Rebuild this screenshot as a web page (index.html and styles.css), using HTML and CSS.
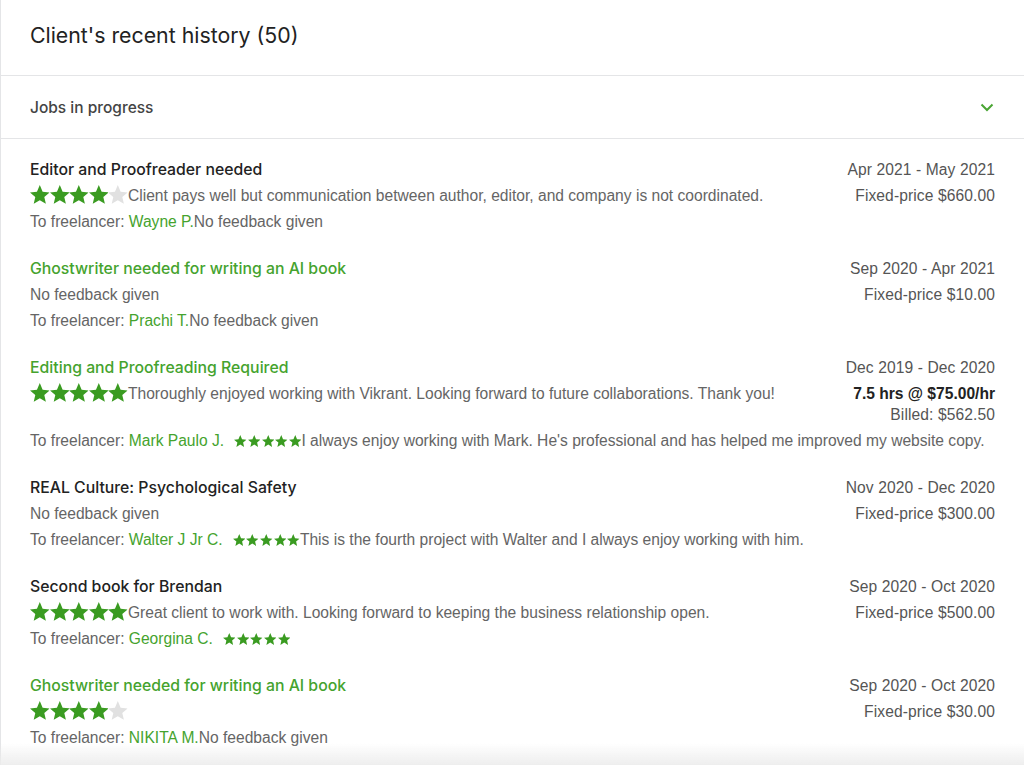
FILE: index.html
```html
<!DOCTYPE html>
<html lang="en">
<head>
    <meta charset="UTF-8">
    <meta name="viewport" content="width=device-width, initial-scale=1.0">
    <title>Client's recent history</title>
    <link rel="stylesheet" href="styles.css">
</head>
<body>
    <svg class="defs" aria-hidden="true">
        <symbol id="star" viewBox="2 2 20 19.3">
            <path d="M12 2l2.9 6.9 7.1.6-5.4 4.7 1.6 7-6.2-3.8-6.2 3.8 1.6-7L2 9.5l7.1-.6z"/>
        </symbol>
    </svg>

    <section class="history">
        <header class="history-head">
            <h2>Client's recent history (50)</h2>
        </header>

        <div class="accordion">
            <span>Jobs in progress</span>
            <svg class="chevron" viewBox="0 0 16 16" width="16" height="16">
                <path d="M2.5 5.5l5.5 5.5 5.5-5.5" fill="none" stroke="currentColor" stroke-width="2"/>
            </svg>
        </div>

        <ul class="jobs">
            <li class="job">
                <div class="row">
                    <span class="job-title">Editor and Proofreader needed</span>
                    <span class="meta">Apr 2021 - May 2021</span>
                </div>
                <div class="row">
                    <span class="feedback"><span class="stars big"><svg class="on"><use href="#star"/></svg><svg class="on"><use href="#star"/></svg><svg class="on"><use href="#star"/></svg><svg class="on"><use href="#star"/></svg><svg class="off"><use href="#star"/></svg></span>Client pays well but communication between author, editor, and company is not coordinated.</span>
                    <span class="meta">Fixed-price $660.00</span>
                </div>
                <div class="row">
                    <span class="feedback">To freelancer: <a href="#">Wayne P.</a>No feedback given</span>
                </div>
            </li>

            <li class="job">
                <div class="row">
                    <a href="#" class="job-title link">Ghostwriter needed for writing an AI book</a>
                    <span class="meta">Sep 2020 - Apr 2021</span>
                </div>
                <div class="row">
                    <span class="feedback">No feedback given</span>
                    <span class="meta">Fixed-price $10.00</span>
                </div>
                <div class="row">
                    <span class="feedback">To freelancer: <a href="#">Prachi T.</a>No feedback given</span>
                </div>
            </li>

            <li class="job">
                <div class="row">
                    <a href="#" class="job-title link">Editing and Proofreading Required</a>
                    <span class="meta">Dec 2019 - Dec 2020</span>
                </div>
                <div class="row">
                    <span class="feedback"><span class="stars big"><svg class="on"><use href="#star"/></svg><svg class="on"><use href="#star"/></svg><svg class="on"><use href="#star"/></svg><svg class="on"><use href="#star"/></svg><svg class="on"><use href="#star"/></svg></span>Thoroughly enjoyed working with Vikrant. Looking forward to future collaborations. Thank you!</span>
                    <span class="meta">
                        <strong>7.5 hrs @ $75.00/hr</strong>
                        <span class="billed">Billed: $562.50</span>
                    </span>
                </div>
                <div class="row">
                    <span class="feedback">To freelancer: <a href="#">Mark Paulo J.</a><span class="stars small"><svg class="on"><use href="#star"/></svg><svg class="on"><use href="#star"/></svg><svg class="on"><use href="#star"/></svg><svg class="on"><use href="#star"/></svg><svg class="on"><use href="#star"/></svg></span>I always enjoy working with Mark. He's professional and has helped me improved my website copy.</span>
                </div>
            </li>

            <li class="job">
                <div class="row">
                    <span class="job-title">REAL Culture: Psychological Safety</span>
                    <span class="meta">Nov 2020 - Dec 2020</span>
                </div>
                <div class="row">
                    <span class="feedback">No feedback given</span>
                    <span class="meta">Fixed-price $300.00</span>
                </div>
                <div class="row">
                    <span class="feedback">To freelancer: <a href="#">Walter J Jr C.</a><span class="stars small"><svg class="on"><use href="#star"/></svg><svg class="on"><use href="#star"/></svg><svg class="on"><use href="#star"/></svg><svg class="on"><use href="#star"/></svg><svg class="on"><use href="#star"/></svg></span>This is the fourth project with Walter and I always enjoy working with him.</span>
                </div>
            </li>

            <li class="job">
                <div class="row">
                    <span class="job-title">Second book for Brendan</span>
                    <span class="meta">Sep 2020 - Oct 2020</span>
                </div>
                <div class="row">
                    <span class="feedback"><span class="stars big"><svg class="on"><use href="#star"/></svg><svg class="on"><use href="#star"/></svg><svg class="on"><use href="#star"/></svg><svg class="on"><use href="#star"/></svg><svg class="on"><use href="#star"/></svg></span>Great client to work with. Looking forward to keeping the business relationship open.</span>
                    <span class="meta">Fixed-price $500.00</span>
                </div>
                <div class="row">
                    <span class="feedback">To freelancer: <a href="#">Georgina C.</a><span class="stars small"><svg class="on"><use href="#star"/></svg><svg class="on"><use href="#star"/></svg><svg class="on"><use href="#star"/></svg><svg class="on"><use href="#star"/></svg><svg class="on"><use href="#star"/></svg></span></span>
                </div>
            </li>

            <li class="job">
                <div class="row">
                    <a href="#" class="job-title link">Ghostwriter needed for writing an AI book</a>
                    <span class="meta">Sep 2020 - Oct 2020</span>
                </div>
                <div class="row">
                    <span class="feedback"><span class="stars big"><svg class="on"><use href="#star"/></svg><svg class="on"><use href="#star"/></svg><svg class="on"><use href="#star"/></svg><svg class="on"><use href="#star"/></svg><svg class="off"><use href="#star"/></svg></span></span>
                    <span class="meta">Fixed-price $30.00</span>
                </div>
                <div class="row">
                    <span class="feedback">To freelancer: <a href="#">NIKITA M.</a>No feedback given</span>
                </div>
            </li>
        </ul>
    </section>

    <div class="fade"></div>
</body>
</html>
```

FILE: styles.css
```css
body {
    margin: 0;
    background: #ffffff;
    font-family: "Liberation Sans", Arial, sans-serif;
    color: #222;
}

.defs {
    position: absolute;
    width: 0;
    height: 0;
}

.history {
    border-left: 1px solid #e4e5e7;
    min-height: 765px;
}

.history-head {
    height: 76px;
    border-bottom: 1px solid #e4e5e7;
    display: flex;
    align-items: center;
    padding: 0 29px;
    box-sizing: border-box;
}

.history-head h2 {
    margin: 0;
    margin-top: -6px;
    font-family: Inter, "Liberation Sans", sans-serif;
    font-size: 21.3px;
    font-weight: 400;
    color: #222;
}

.accordion {
    height: 62px;
    border-bottom: 1px solid #e4e5e7;
    display: flex;
    align-items: center;
    justify-content: space-between;
    padding: 0 29px 0 29px;
    font-family: Inter, "Liberation Sans", sans-serif;
    font-size: 15.5px;
    font-weight: 500;
    color: #444;
}

.chevron {
    color: #4aa534;
}

.jobs {
    list-style: none;
    margin: 0;
    padding: 18px 29px 0 29px;
}

.job {
    padding-bottom: 21px;
}

.row {
    display: flex;
    justify-content: space-between;
    align-items: flex-start;
    line-height: 26px;
    font-size: 15.6px;
}

.job-title {
    font-family: Inter, "Liberation Sans", sans-serif;
    font-weight: 500;
    font-size: 15.8px;
    color: #222;
    text-decoration: none;
}

.job-title.link {
    color: #45a32e;
}

.feedback {
    color: #656565;
}

.feedback a {
    color: #45a32e;
    text-decoration: none;
}

.meta {
    color: #555;
    text-align: right;
    display: flex;
    flex-direction: column;
    align-items: flex-end;
    letter-spacing: 0.1px;
}

.meta strong {
    color: #222;
    font-weight: 700;
    letter-spacing: 0;
}

.billed {
    margin-top: -5px;
}

.stars {
    display: inline-flex;
    vertical-align: -3px;
}

.stars svg {
    fill: #3a9b21;
}

.stars svg.off {
    fill: #e1e1e1;
}

.stars.big svg {
    width: 19.6px;
    height: 19px;
}

.stars.small {
    margin-left: 10px;
    gap: 1.2px;
    vertical-align: -1px;
}

.stars.small svg {
    width: 12.5px;
    height: 12px;
}

.fade {
    position: fixed;
    left: 0;
    right: 0;
    bottom: 0;
    height: 22px;
    background: linear-gradient(to bottom, rgba(240, 240, 240, 0), rgba(236, 236, 236, 0.9));
    pointer-events: none;
}
```
